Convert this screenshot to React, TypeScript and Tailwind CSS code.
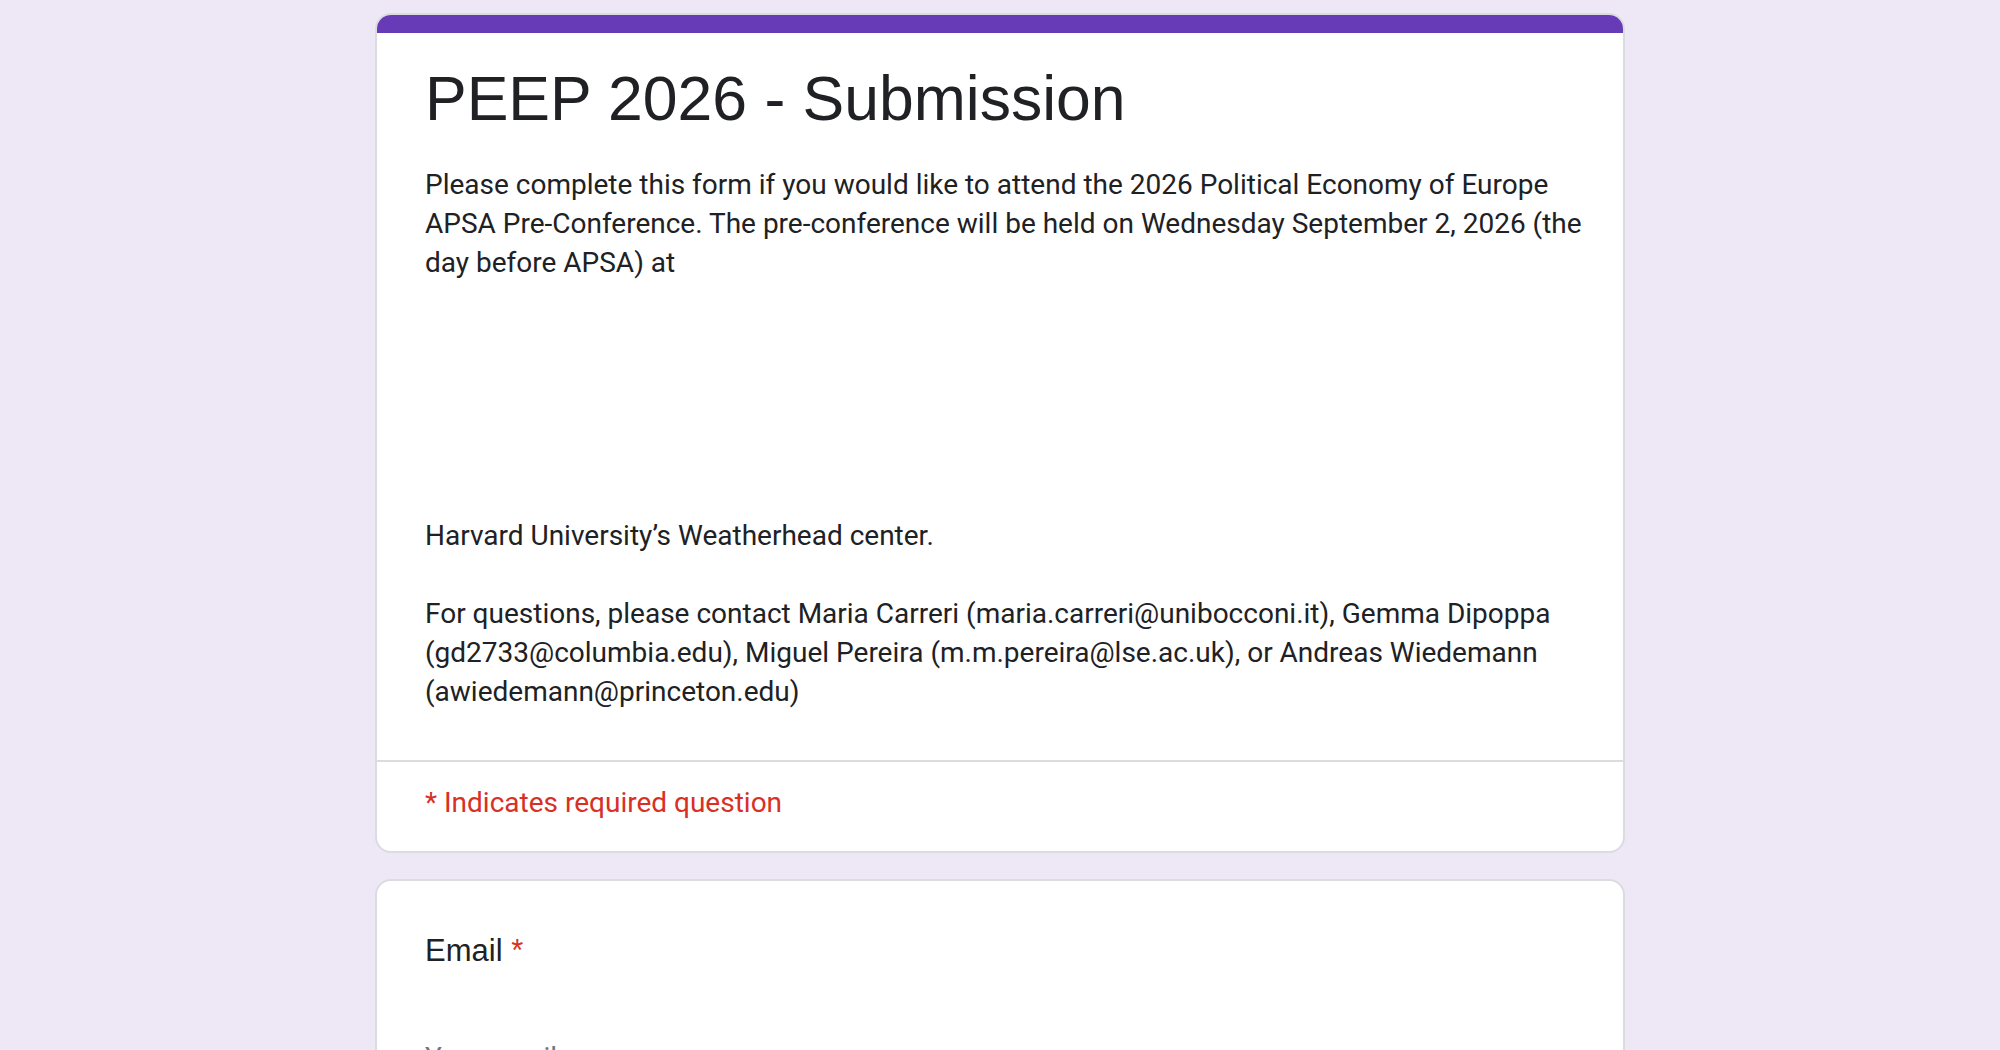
import React from 'react';

// line breaks kept as in the rendered form
const description = [
    'Please complete this form if you would like to attend the 2026 Political Economy of Europe',
    'APSA Pre-Conference. The pre-conference will be held on Wednesday September 2, 2026 (the',
    'day before APSA) at',
    '',
    '',
    '',
    '',
    '',
    '',
    'Harvard University’s Weatherhead center.',
    '',
    'For questions, please contact Maria Carreri (maria.carreri@unibocconi.it), Gemma Dipoppa',
    '(gd2733@columbia.edu), Miguel Pereira (m.m.pereira@lse.ac.uk), or Andreas Wiedemann',
    '(awiedemann@princeton.edu)',
].join('\n');

const HeaderCard = () => (
    <div className="w-[1250px] rounded-[16px] bg-white border-2 border-[#dadce0] overflow-hidden">
        <div className="h-[20px] bg-[#673ab7] -mx-[2px] -mt-[2px]" />
        <div className="px-[48px] pt-[23px] pb-[49px] border-b-2 border-[#dadce0]">
            <h1 className="text-[62.5px] leading-[84px] text-[#202124] font-['Liberation_Sans',Arial,sans-serif]">
                PEEP 2026 - Submission
            </h1>
            <div className="mt-[25px] text-[28px] leading-[39px] text-[#202124] whitespace-pre font-['Roboto',sans-serif]">
                {description}
            </div>
        </div>
        <div className="px-[48px] pt-[21px] pb-[29px] text-[28px] leading-[39px] text-[#d93025] font-['Roboto',sans-serif]">
            * Indicates required question
        </div>
    </div>
);

const EmailCard = () => (
    <div className="w-[1250px] rounded-[16px] bg-white border-2 border-[#dadce0] px-[48px] pt-[46px] pb-[48px]">
        <div className="text-[31px] leading-[47px] text-[#202124] font-['Liberation_Sans',Arial,sans-serif]">
            Email <span className="text-[#d93025]">*</span>
        </div>
        <div className="mt-[64px] w-[600px] border-b-2 border-[#dadce0] text-[28px] leading-[39px] text-[#70757a] font-['Roboto',sans-serif] pb-2">
            Your email
        </div>
    </div>
);

export default function App() {
    return (
        <div className="min-h-screen bg-[#ede7f6] flex flex-col items-center gap-[26px] pt-[13px] pb-10">
            <HeaderCard />
            <EmailCard />
        </div>
    );
}
